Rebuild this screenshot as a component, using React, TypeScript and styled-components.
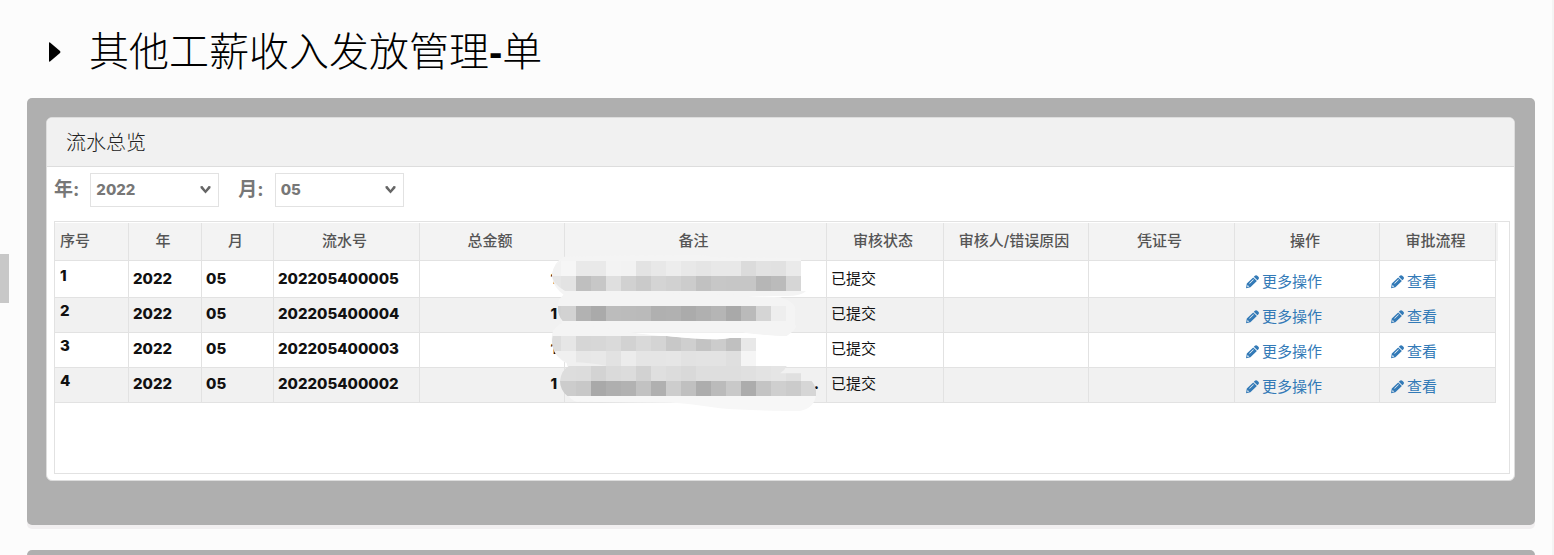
import React from 'react';
import styled, { createGlobalStyle } from 'styled-components';

const GlobalStyle = createGlobalStyle`
  * { box-sizing: border-box; }
  body {
    margin: 0;
    background: #fcfcfc;
    font-family: Inter, "Noto Sans CJK SC", sans-serif;
    font-size: 15px;
    line-height: 20px;
    color: #111;
  }
`;

const Page = styled.main`
  border-right: 2px solid #f4f4f4;
  padding: 26px 17px 0 27px;
  height: 100vh;
  overflow: hidden;
`;

const TitleBar = styled.header`
  display: flex;
  align-items: center;
  gap: 28px;
  height: 52px;
  margin-bottom: 20px;
  padding-left: 22px;
`;

const CollapseButton = styled.button`
  display: flex;
  border: 0;
  padding: 0;
  background: none;
  color: #000;
`;

const Title = styled.h1`
  margin: 0;
  font-size: 40px;
  line-height: 52px;
  font-weight: 300;
  color: #000;
`;

const Dash = styled.span`
  font-family: "Liberation Sans", sans-serif;
  font-weight: 700;
`;

const SideHandle = styled.button`
  position: fixed;
  left: 0;
  top: 254px;
  width: 9px;
  height: 49px;
  border: 0;
  padding: 0;
  background: #c8c8c8;
`;

const Panel = styled.section`
  min-height: 427px;
  margin-bottom: 25px;
  padding: 19px 20px 44px 19px;
  border-radius: 5px;
  background: #afafaf;
  box-shadow: 0 4px 0 #f1eff0;
`;

const Card = styled.div`
  border: 1px solid #ddd;
  border-radius: 6px;
  background: #fff;
  overflow: hidden;
`;

const CardTitle = styled.h2`
  margin: 0;
  padding: 11px 19px 9px;
  border-bottom: 1px solid #ddd;
  background: #f1f1f1;
  font-size: 20px;
  line-height: 28px;
  font-weight: 300;
  color: #222;
`;

const CardBody = styled.div`
  padding: 6px 4px 6px 7px;
`;

const Filters = styled.form`
  display: flex;
  gap: 19px;
  margin-bottom: 14px;
`;

const Field = styled.label`
  display: flex;
  align-items: center;
  gap: 11px;
  height: 34px;
  font-size: 19px;
  font-weight: 700;
  color: #777;
`;

const SelectBox = styled.span`
  position: relative;
  display: flex;
`;

const Select = styled.select`
  appearance: none;
  width: 129px;
  height: 34px;
  padding: 0 24px 0 5px;
  border: 1px solid #e2e2e2;
  border-radius: 0;
  background: #fff;
  font: inherit;
  font-size: 15px;
  font-weight: 800;
  color: #777;
`;

const SelectArrow = styled.svg`
  position: absolute;
  right: 8px;
  top: 12px;
  pointer-events: none;
`;

const Grid = styled.div`
  min-height: 253px;
  padding: 1px 14px 0 0;
  border: 1px solid #e2e2e2;
`;

const Table = styled.table`
  width: 100%;
  table-layout: fixed;
  border-collapse: separate;
  border-spacing: 0;
`;

const HeadCell = styled.th<{ $left?: boolean }>`
  height: 38px;
  padding: ${(p) => (p.$left ? '0 5px 2px' : '0 9px 2px 5px')};
  border-right: 1px solid #e2e2e2;
  border-bottom: 1px solid #e2e2e2;
  background: #f3f3f3;
  font-weight: 500;
  white-space: nowrap;
  color: #555;
  text-align: ${(p) => (p.$left ? 'left' : 'center')};
  &:last-child { box-shadow: 2px 0 0 #f3f3f3; }
`;

const Row = styled.tr`
  height: 35px;
  &:first-child { height: 37px; }
  &:nth-child(even) { background: #f1f1f1; }
`;

const Cell = styled.td<{ $kind?: 'index' | 'link' | 'text' | 'amount' }>`
  position: relative;
  padding: 0 7px 8px 4px;
  border-right: 1px solid #e2e2e2;
  border-bottom: 1px solid #e2e2e2;
  vertical-align: bottom;
  white-space: nowrap;
  font-weight: ${(p) => (p.$kind === 'text' || p.$kind === 'link' ? 400 : 800)};
  text-align: ${(p) => (p.$kind === 'amount' ? 'right' : 'left')};
  ${(p) => p.$kind === 'index' && 'padding: 0 5px 11px 5px;'}
  ${(p) => p.$kind === 'link' && 'padding: 0 5px 5px 11px;'}
`;

const ActionLink = styled.a`
  display: flex;
  align-items: center;
  gap: 3px;
  color: #337ab7;
  text-decoration: none;
`;

const Mask = styled.svg`
  position: absolute;
  left: -15px;
  top: -7px;
  z-index: 1;
  pointer-events: none;
`;

const Pencil = () => (
  <svg width="13" height="14" viewBox="0 0 13 14" fill="currentColor" aria-hidden="true">
    <path
      d="M8.6 1Q10 -0.3 11.6 0.9L12.6 2Q13.5 3.3 12.2 4.5L11.4 5.3L7.8 1.8ZM7.2 2.4L10.9 6L4.4 12.2L0 13.3L0.8 8.6ZM1.6 10L1.2 12L3.2 11.6ZM7.3 4.2L3.2 8.2L3.7 8.7L7.8 4.7Z"
      fillRule="evenodd"
    />
  </svg>
);

const BLOCK = 45;
const mosaics = [
  {
    y: 33,
    clip: 'M80 0H783V123H75Q36 100 36 75Q40 38 80 26Z',
    rows: [
      'f2 f6 e9 e9 f3 f2 e3 e8 ed e8 e5 e8 e8 db e2 e1 ea',
      'e6 e3 bf c7 df d1 ca d4 d1 cc c1 c7 c6 c6 b6 bb d6',
    ],
  },
  {
    y: 168,
    clip: 'M54 160H738V213H68Q52 196 54 168Z',
    rows: ['d0 d2 b2 aa bc bb ba b0 b1 ab b0 b5 a9 ba d5 ee'],
  },
  {
    y: 258,
    clip: 'M38 258H380Q450 266 530 268L570 264H648V348H100Q60 330 45 308Q32 285 38 258Z',
    rows: [
      'dd e6 d6 d7 da d2 d9 d4 c8 cf c3 cc c0 e8',
      'f0 f0 e7 e8 e2 ec e5 e5 e6 e2 e3 e3 df f5',
    ],
  },
  {
    y: 348,
    clip: 'M86 348H740Q735 360 720 370H783Q820 385 828 420V438H82Q60 420 60 393Q64 360 86 348Z',
    rows: [
      'dd dd dc d3 da dc d2 df dc d9 de de de e0 e3 e5 e0',
      'cc cc c8 a9 af b2 c2 b0 cd c0 ad bb c9 ac c4 cf cb d6',
    ],
  },
];

const RedactionMask = () => (
  <Mask width="272" height="162" viewBox="30 12 816 486" aria-hidden="true">
    <g fill="#f4f4f4">
      <path d="M72 20Q300 14 480 15Q512 17 515 22L783 24V123H798Q785 138 740 138H75Q36 110 36 75Q40 36 72 20Z" />
      <path d="M75 129Q500 125 620 138L720 142Q765 155 766 178V225Q775 235 740 258Q690 258 610 248H65V213Q50 190 56 150Z" />
      <path d="M60 222Q240 236 290 250L380 260V348H100Q60 335 45 308Q28 270 40 240Z" />
      <path fill="#f7f7f7" d="M82 430H828Q826 475 780 483Q620 482 540 475Q450 460 390 458L110 455Q90 450 82 430Z" />
    </g>
    {mosaics.map((m, i) => (
      <g key={i} clipPath={`url(#mask-${i})`} shapeRendering="crispEdges">
        <clipPath id={`mask-${i}`}>
          <path d={m.clip} />
        </clipPath>
        {m.rows.map((r, j) =>
          r.split(' ').map((tone, k) => (
            <rect
              key={`${j}-${k}`}
              x={18 + k * BLOCK}
              y={m.y + j * BLOCK}
              width={BLOCK}
              height={BLOCK}
              fill={`#${tone}${tone}${tone}`}
            />
          )),
        )}
      </g>
    ))}
    <path fill="#f0f0f0" d="M80 338Q130 334 200 348H82Z" />
    <path fill="#fff" d="M290 249H610Q690 258 740 259V264H570Q530 272 450 264L380 258Z" />
  </Mask>
);

const columns = [
  { name: '序号', width: 74 },
  { name: '年', width: 73 },
  { name: '月', width: 72 },
  { name: '流水号', width: 146 },
  { name: '总金额', width: 145 },
  { name: '备注', width: 262 },
  { name: '审核状态', width: 117 },
  { name: '审核人/错误原因', width: 145 },
  { name: '凭证号', width: 146 },
  { name: '操作', width: 145 },
  { name: '审批流程', width: 116 },
];

const records = ['202205400005', '202205400004', '202205400003', '202205400002'];

const Dropdown = ({ label, options }: { label: string; options: string[] }) => (
  <Field>
    {label}
    <SelectBox>
      <Select defaultValue={options[0]}>
        {options.map((o) => (
          <option key={o}>{o}</option>
        ))}
      </Select>
      <SelectArrow width="11" height="10" viewBox="0 0 11 10" fill="#666" aria-hidden="true">
        <path d="M0.5 1.2L2.4 0.9L5.5 4.9L8.6 0.9L10.5 1.2V3L5.5 8.6L0.5 3Z" />
      </SelectArrow>
    </SelectBox>
  </Field>
);

export default function App() {
  return (
    <>
      <GlobalStyle />
      <SideHandle aria-label="展开侧栏" />
      <Page>
        <TitleBar>
          <CollapseButton aria-label="折叠">
            <svg width="12" height="20" viewBox="0 0 12 20" fill="currentColor">
              <path d="M0 1Q0 0 1 0.5L11 9Q12 10 11 11L1 19.5Q0 20 0 19Z" />
            </svg>
          </CollapseButton>
          <Title>
            其他工薪收入发放管理<Dash>-</Dash>单
          </Title>
        </TitleBar>
        <Panel>
          <Card>
            <CardTitle>流水总览</CardTitle>
            <CardBody>
              <Filters>
                <Dropdown label="年:" options={['2022']} />
                <Dropdown label="月:" options={['05']} />
              </Filters>
              <Grid>
                <Table>
                  <colgroup>
                    {columns.map((c) => (
                      <col key={c.name} width={c.width} />
                    ))}
                  </colgroup>
                  <thead>
                    <tr>
                      {columns.map((c, i) => (
                        <HeadCell key={c.name} scope="col" $left={i === 0}>
                          {c.name}
                        </HeadCell>
                      ))}
                    </tr>
                  </thead>
                  <tbody>
                    {records.map((serial, i) => (
                      <Row key={serial}>
                        <Cell $kind="index">{i + 1}</Cell>
                        <Cell>2022</Cell>
                        <Cell>05</Cell>
                        <Cell>{serial}</Cell>
                        <Cell $kind="amount">1</Cell>
                        <Cell $kind="amount">
                          {i === 0 && <RedactionMask />}
                          {i === 3 && '.'}
                        </Cell>
                        <Cell $kind="text">已提交</Cell>
                        <Cell />
                        <Cell />
                        <Cell $kind="link">
                          <ActionLink href="#more">
                            <Pencil />
                            更多操作
                          </ActionLink>
                        </Cell>
                        <Cell $kind="link">
                          <ActionLink href="#view">
                            <Pencil />
                            查看
                          </ActionLink>
                        </Cell>
                      </Row>
                    ))}
                  </tbody>
                </Table>
              </Grid>
            </CardBody>
          </Card>
        </Panel>
        <Panel />
      </Page>
    </>
  );
}
